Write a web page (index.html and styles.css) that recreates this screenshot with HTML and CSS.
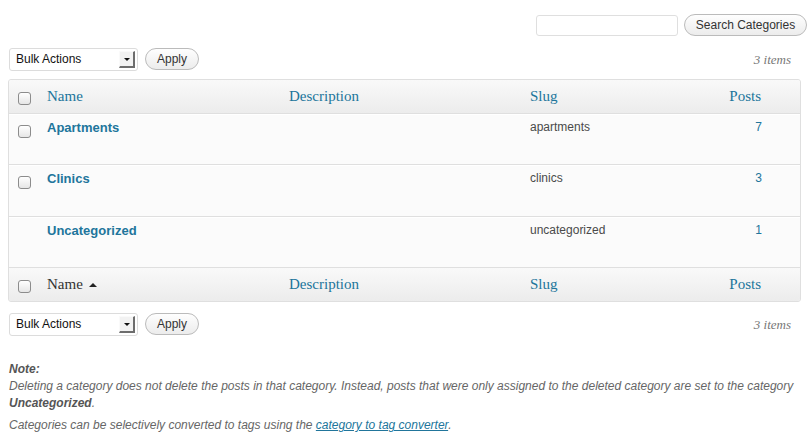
FILE: index.html
```html
<!DOCTYPE html>
<html>
<head>
<meta charset="utf-8">
<link rel="stylesheet" href="styles.css">
</head>
<body>
<div class="wrap">
  <div class="search-row">
    <input class="search-input" type="text">
    <button class="btn btn-search">Search Categories</button>
  </div>

  <div class="tablenav">
    <div class="actions">
      <div class="select"><span class="select-label">Bulk Actions</span><span class="select-arrow"></span></div>
      <button class="btn btn-apply">Apply</button>
    </div>
    <div class="count">3 items</div>
  </div>

  <div class="list">
    <div class="row head">
      <div class="cell cb"><span class="check"></span></div>
      <div class="cell h">Name</div>
      <div class="cell h">Description</div>
      <div class="cell h">Slug</div>
      <div class="cell h posts">Posts</div>
    </div>
    <div class="row item">
      <div class="cell cb"><span class="check"></span></div>
      <div class="cell name"><a href="#">Apartments</a></div>
      <div class="cell"></div>
      <div class="cell slug">apartments</div>
      <div class="cell num">7</div>
    </div>
    <div class="row item tall">
      <div class="cell cb"><span class="check"></span></div>
      <div class="cell name"><a href="#">Clinics</a></div>
      <div class="cell"></div>
      <div class="cell slug">clinics</div>
      <div class="cell num">3</div>
    </div>
    <div class="row item">
      <div class="cell cb"></div>
      <div class="cell name"><a href="#">Uncategorized</a></div>
      <div class="cell"></div>
      <div class="cell slug">uncategorized</div>
      <div class="cell num">1</div>
    </div>
    <div class="row foot">
      <div class="cell cb"><span class="check"></span></div>
      <div class="cell h sorted">Name <span class="sort-up"></span></div>
      <div class="cell h">Description</div>
      <div class="cell h">Slug</div>
      <div class="cell h posts">Posts</div>
    </div>
  </div>

  <div class="tablenav bottom">
    <div class="actions">
      <div class="select"><span class="select-label">Bulk Actions</span><span class="select-arrow"></span></div>
      <button class="btn btn-apply">Apply</button>
    </div>
    <div class="count">3 items</div>
  </div>

  <div class="note">
    <p><strong>Note:</strong><br>Deleting a category does not delete the posts in that category. Instead, posts that were only assigned to the deleted category are set to the category <strong>Uncategorized</strong>.</p>
    <p>Categories can be selectively converted to tags using the <a href="#">category to tag converter</a>.</p>
  </div>
</div>
</body>
</html>
```

FILE: styles.css
```css
html, body {
  margin: 0;
  padding: 0;
  background: #fff;
}
body {
  font-family: "Liberation Sans", Arial, sans-serif;
  font-size: 13px;
  color: #333;
}
.wrap {
  margin-left: 8px;
  width: 793px;
}
.search-row {
  display: flex;
  justify-content: flex-end;
  align-items: center;
  gap: 6px;
  margin-right: -6px;
  padding-top: 14px;
}
.search-input {
  box-sizing: border-box;
  width: 142px;
  height: 21px;
  margin: 1px 0 0;
  border: 1px solid #dfdfdf;
  border-radius: 3px;
  background: #fff;
}
.btn {
  box-sizing: border-box;
  font-family: "Liberation Sans", Arial, sans-serif;
  font-size: 12px;
  color: #333;
  border: 1px solid #bbb;
  border-radius: 11px;
  background: linear-gradient(#fefefe, #ececec);
  padding: 0;
  line-height: 18px;
}
.btn-search {
  width: 123px;
  height: 22px;
}
.tablenav {
  display: flex;
  justify-content: space-between;
  align-items: center;
  height: 24px;
  margin-top: 11px;
}
.tablenav.bottom {
  margin-top: 10px;
}
.actions {
  display: flex;
  align-items: center;
}
.select {
  box-sizing: border-box;
  position: relative;
  width: 129px;
  height: 23px;
  margin-left: 1px;
  border: 1px solid #dcdcdc;
  border-radius: 3px;
  background: #fff;
  display: flex;
  align-items: center;
}
.select-label {
  padding-left: 6px;
  font-size: 12px;
  color: #111;
}
.select-arrow {
  position: absolute;
  right: 2px;
  top: 2px;
  box-sizing: border-box;
  width: 16px;
  height: 17px;
  background: #f2f2f2;
  border-top: 1px solid #fafafa;
  border-left: 1px solid #fafafa;
  border-right: 2px solid #6d6d6d;
  border-bottom: 2px solid #6d6d6d;
}
.select-arrow::after {
  content: "";
  position: absolute;
  left: 4px;
  top: 6px;
  border-left: 3px solid transparent;
  border-right: 3px solid transparent;
  border-top: 3px solid #111;
}
.btn-apply {
  width: 54px;
  height: 22px;
  margin-left: 7px;
}
.count {
  font-family: "Liberation Serif", Georgia, serif;
  font-style: italic;
  font-size: 13px;
  color: #777;
  margin-right: 10px;
  padding-top: 2px;
}
.list {
  margin-top: 8px;
  border: 1px solid #dfdfdf;
  border-radius: 3px;
  background: #f9f9f9;
  overflow: hidden;
}
.row {
  display: grid;
  grid-template-columns: 38px 242px 241px 197px 73px;
  box-sizing: border-box;
}
.row.head {
  height: 34px;
  background: linear-gradient(#f9f9f9, #ececec);
  border-bottom: 1px solid #dfdfdf;
  align-items: center;
}
.row.foot {
  height: 33px;
  background: linear-gradient(#f9f9f9, #ececec);
  align-items: center;
}
.row.item {
  height: 51px;
  border-top: 1px solid #fff;
  border-bottom: 1px solid #dfdfdf;
  background: #fbfbfb;
}
.row.item.tall {
  height: 52px;
}
.cell.h {
  font-family: "Liberation Serif", Georgia, serif;
  font-size: 15px;
  color: #21759b;
}
.cell.h.sorted {
  color: #333;
  display: flex;
  align-items: center;
}
.sort-up {
  display: inline-block;
  margin-left: 6px;
  margin-top: 1px;
  border-left: 4px solid transparent;
  border-right: 4px solid transparent;
  border-bottom: 4px solid #222;
}
.cell.posts {
  text-align: right;
  padding-right: 39px;
}
.cb {
  padding-left: 9px;
}
.check {
  display: block;
  box-sizing: border-box;
  width: 13px;
  height: 13px;
  border: 1px solid #8c8c8c;
  border-radius: 3px;
  background: linear-gradient(#fff, #e6e6e6);
}
.head .check {
  margin-top: 4px;
}
.foot .check {
  margin-top: 4px;
}
.item .check {
  margin-top: 10px;
}
.name {
  padding-top: 3px;
  line-height: 19px;
}
.name a {
  color: #21759b;
  font-weight: bold;
  font-size: 13px;
  text-decoration: none;
}
.slug {
  font-size: 12px;
  line-height: 15px;
  padding-top: 5px;
  color: #4a4a4a;
}
.num {
  font-size: 12px;
  line-height: 15px;
  padding-top: 5px;
  color: #21759b;
  text-align: right;
  padding-right: 38px;
}
.note {
  margin-top: 25px;
  padding-left: 1px;
  font-size: 12px;
  font-style: italic;
  color: #666;
}
.note p {
  margin: 0 0 5px;
  line-height: 17px;
}
.note strong {
  color: #555;
}
.note a {
  color: #21759b;
  text-decoration: underline;
}
```
